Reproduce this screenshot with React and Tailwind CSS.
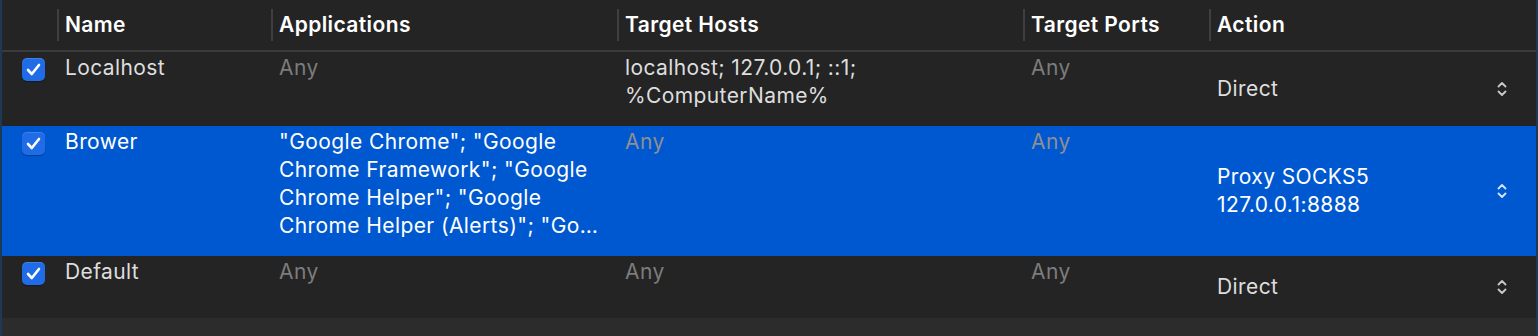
import React from 'react';

const rows = [
  {
    id: 'localhost',
    name: 'Localhost',
    apps: null,
    hosts: ['localhost; 127.0.0.1; ::1;', '%ComputerName%'],
    ports: null,
    action: ['Direct'],
    height: 'h-[74px]',
    selected: false,
  },
  {
    id: 'browser',
    name: 'Brower',
    apps: [
      '"Google Chrome"; "Google',
      'Chrome Framework"; "Google',
      'Chrome Helper"; "Google',
      'Chrome Helper (Alerts)"; "Go…',
    ],
    hosts: null,
    ports: null,
    action: ['Proxy SOCKS5', '127.0.0.1:8888'],
    height: 'h-[130px]',
    selected: true,
  },
  {
    id: 'default',
    name: 'Default',
    apps: null,
    hosts: null,
    ports: null,
    action: ['Direct'],
    height: 'h-[62px]',
    selected: false,
  },
];

const cols = 'grid grid-cols-[55px_214px_346px_406px_186px_314px_1fr]';

function Check() {
  return (
    <div className="mt-[6px] ml-5 w-[23px] h-[23px] rounded-[5px] bg-[#1f6ce6] shadow-[inset_0_1px_0_rgba(255,255,255,0.15),0_1px_1px_rgba(0,0,0,0.3)] flex items-center justify-center">
      <svg width="15" height="13" viewBox="0 0 15 13" fill="none">
        <path d="M2 7 L5.8 11 L13 2" stroke="white" strokeWidth="2.6" strokeLinecap="round" strokeLinejoin="round" />
      </svg>
    </div>
  );
}

function Stepper({ selected }) {
  const c = selected ? '#d6e4fb' : '#c9c9c9';
  return (
    <svg width="10" height="16" viewBox="0 0 10 16" fill="none">
      <path d="M1.5 5.5 L5 2 L8.5 5.5" stroke={c} strokeWidth="1.8" strokeLinecap="round" strokeLinejoin="round" />
      <path d="M1.5 10.5 L5 14 L8.5 10.5" stroke={c} strokeWidth="1.8" strokeLinecap="round" strokeLinejoin="round" />
    </svg>
  );
}

function Lines({ lines, selected }) {
  if (!lines) {
    return <span className={selected ? 'text-[#8e8e93]' : 'text-[#7c7c7c]'}>Any</span>;
  }
  return lines.map((l, i) => <div key={i} className="whitespace-nowrap">{l}</div>);
}

function HeaderCell({ label }) {
  return (
    <div className="flex items-center h-[50px]">
      <div className="w-[2px] h-[32px] bg-[#3f3f3f]" />
      <span className="pl-[6px] font-semibold text-white">{label}</span>
    </div>
  );
}

export default function App() {
  return (
    <div
      className="w-[1538px] h-[336px] bg-[#2c2c2d] border-x-2 border-[#1d3a55] overflow-hidden text-[21px] leading-[28px] tracking-[0.4px]"
      style={{ fontFamily: 'Inter, "Liberation Sans", sans-serif' }}
    >
      <div className="bg-[#242424]">
        <div className={`${cols} border-b-2 border-[#3a3a3a]`}>
          <div />
          <HeaderCell label="Name" />
          <HeaderCell label="Applications" />
          <HeaderCell label="Target Hosts" />
          <HeaderCell label="Target Ports" />
          <HeaderCell label="Action" />
          <div className="flex items-center h-[50px] pl-[100px]">
            <div className="w-[2px] h-[32px] bg-[#3f3f3f]" />
          </div>
        </div>

        {rows.map((r) => {
          const text = r.selected ? 'text-white' : 'text-[#dedede]';
          return (
            <div
              key={r.id}
              className={`${cols} ${r.height} ${r.selected ? 'bg-[#0058d0]' : ''} ${text}`}
            >
              <div><Check /></div>
              <div className="pl-2 pt-[2px]">{r.name}</div>
              <div className="pl-2 pt-[2px]"><Lines lines={r.apps} selected={r.selected} /></div>
              <div className="pl-2 pt-[2px]"><Lines lines={r.hosts} selected={r.selected} /></div>
              <div className="pl-2 pt-[2px]"><Lines lines={r.ports} selected={r.selected} /></div>
              <div className="pl-2 flex items-center justify-between pr-[16px]">
                <div>
                  {r.action.map((a) => (
                    <div key={a}>{a}</div>
                  ))}
                </div>
                <Stepper selected={r.selected} />
              </div>
              <div />
            </div>
          );
        })}
      </div>
    </div>
  );
}
